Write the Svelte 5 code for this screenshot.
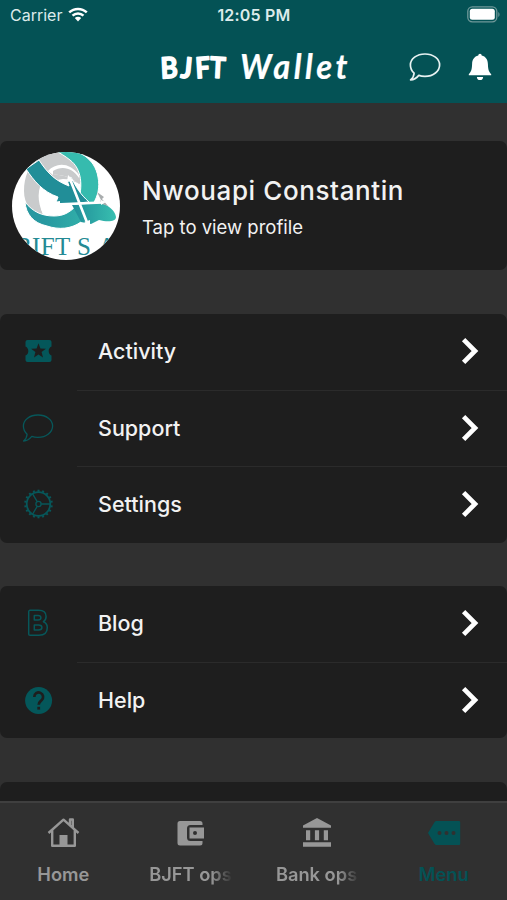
<script>
const groups = [
    [
        { icon: "ticket", label: "Activity" },
        { icon: "chat", label: "Support" },
        { icon: "cog", label: "Settings" }
    ],
    [
        { icon: "blog", label: "Blog" },
        { icon: "help", label: "Help" }
    ]
]

const tabs = [
    { icon: "home", label: "Home" },
    { icon: "wallet", label: "BJFT ops", clipped: true },
    { icon: "bank", label: "Bank ops", clipped: true },
    { icon: "more", label: "Menu" }
]

const teeth = Array.from({ length: 18 }, (_, i) => i * 20)

let active = "Menu"
</script>

{#snippet bubble()}
    <path d="M16 3C24.3 3 30.6 7.8 30.6 14S24.3 25.4 16 25.4c-2.2 0-4.3-.3-6.2-1C7.7 27 4.8 28.8 1.6 29c2-1.700 3.300-4 3.500-6.800C2.700 20 1.400 17.200 1.400 14 1.400 7.800 7.700 3 16 3z" />
{/snippet}

<div class="phone">
    <header>
        <div class="status">
            <div class="carrier">
                <span>Carrier</span>
                <svg class="wifi" viewBox="0 0 20 15">
                    <path d="M1.200 5.400C6.200.700 13.800.700 18.800 5.400M4.500 8.700c3.200-3 7.800-3 11 0" />
                    <path class="solid" d="M6.800 11.100c1.900-1.700 4.500-1.700 6.400 0L10 14.500z" />
                </svg>
            </div>
            <div class="time">12:05 PM</div>
            <svg class="battery" viewBox="0 0 33 17">
                <rect class="shell" x=".8" y=".8" width="29" height="15" rx="4.500" />
                <rect class="level" x="2.800" y="2.800" width="25" height="11" rx="2.500" />
                <path class="tip" d="M31.300 6v5c1.600-.8 1.600-4.200 0-5z" />
            </svg>
        </div>
        <div class="navbar">
            <svg class="brand" viewBox="0 0 200 40">
                <text class="brand-bold" transform="translate(2 28.500) scale(.9 1)" x="0 21 39 54" y="0 -1 0 -1" rotate="-3 6 -4 3">BJFT</text>
                <text class="brand-italic" transform="translate(81 28.500) scale(.96 1)" textLength="112" lengthAdjust="spacing">Wallet</text>
            </svg>
            <svg class="nav-chat" viewBox="0 0 32 32">{@render bubble()}</svg>
            <svg class="bell" viewBox="0 0 24 28">
                <path d="M12 .8c1 0 1.600.7 1.700 1.800 4 .9 6 4 6.200 8.400.2 5.500.8 7.800 3.300 10.200v1H.8v-1C3.300 18.800 3.900 16.500 4.100 11c.2-4.400 2.200-7.500 6.200-8.400C10.400 1.500 11 .8 12 .8zM8.900 23.900h6.200a3.100 3.100 0 0 1-6.200 0z" />
            </svg>
        </div>
    </header>

    <main>
        <section class="card profile">
            <svg class="avatar" viewBox="0 0 108 108">
                <defs>
                    <clipPath id="round"><circle cx="54" cy="54" r="54" /></clipPath>
                    <linearGradient id="teal" x1="0" x2="1" y1="0" y2="0">
                        <stop offset="0" stop-color="#208d98" />
                        <stop offset="1" stop-color="#38bfb0" />
                    </linearGradient>
                    <linearGradient id="swoosh" x1="0" x2="1" y1="0" y2="0">
                        <stop offset=".3" stop-color="#2798a0" />
                        <stop offset="1" stop-color="#33b3ab" />
                    </linearGradient>
                </defs>
                <g clip-path="url(#round)">
                    <rect width="108" height="108" fill="#fff" />
                    <path fill="#c9cbcc" d="M26 6C36-3 55-2 65 10c3 5 4 12 3 22-6-3-12-5-17-5-12 1-21 9-22 20-1 7 0 12 3 17-13-2-20-12-20-25C12 25 17 13 26 6z" />
                    <path fill="#fff" d="M36 19c8-9 22-9 31 4l0 9c-7-6-17-10-26-9z" />
                    <path fill="#c9cbcc" d="M41 19c9-6 20-3 26 7l0 6c-7-6-17-10-26-9z" />
                    <path fill="#fff" d="M32 27l32 22-18 16-15-3c-6-13-6-25 1-35z" />
                    <path fill="#36bbae" stroke="#fff" d="M42-2C67-5 83 7 86 25c2 10 0 19-5 27l-15-1C71 34 70 17 58 8 53 4 48 1 42-2z" />
                    <path fill="url(#swoosh)" stroke="#fff" d="M13 50c8 10 17 14 29 14 9 0 15-3 22-10l14 15-9 1c-10 7-22 8-34 4C21 71 14 62 13 50z" />
                    <path fill="url(#teal)" d="M60 53l29-2c9 3 14 8 15 14 0 5-9 5-17 3l-8 4-10-2z" />
                    <path fill="#218e98" stroke="#fff" d="M14 17L27 8c9 14 17 21 30 26l-2-6 4-3c5 10 9 17 18 25l-34 3 3-8C31 40 22 29 14 17z" />
                    <path fill="#a9adae" d="M85 40l7 5-2 2 6 7-9-3 2-3z" />
                    <path class="cross" d="M43 52.500l47-2M58 27l18 46" />
                    <path fill="#fff" d="M41 50l7-1v7zM55 30l1-7 6 6zM72 70l6-2 0 6zM89 48l5 2-5 3z" />
                    <text x="3" y="103" textLength="101" lengthAdjust="spacing">BIFT S.A</text>
                </g>
            </svg>
            <div class="who">
                <div class="name">Nwouapi Constantin</div>
                <div class="hint">Tap to view profile</div>
            </div>
        </section>

        {#each groups as group}
            <section class="card">
                {#each group as item}
                    <div class="row">
                        <svg class="icon" viewBox="0 0 32 32">
                            {#if item.icon === "ticket"}
                                <path class="fill" fill-rule="evenodd" d="M5.500 5h22a2 2 0 0 1 2 2v4.500c-2 1-2.800 2.500-2.800 4.500s.8 3.500 2.800 4.500V25a2 2 0 0 1-2 2h-22a2 2 0 0 1-2-2v-4.500c2-1 2.800-2.500 2.800-4.500s-.8-3.500-2.800-4.500V7a2 2 0 0 1 2-2zM16.500 8.300l-1.900 5.100-5.500.3 4.300 3.400L12 22.500 16.500 19.500l4.500 3-1.400-5.400 4.300-3.400-5.500-.3z" />
                            {:else if item.icon === "chat"}
                                <g class="line">{@render bubble()}</g>
                            {:else if item.icon === "cog"}
                                <g class="line">
                                    <circle class="ring" cx="16.500" cy="16" r="11.800" />
                                    <circle cx="16.500" cy="16" r="2.600" />
                                    <path d="M19.100 16h9.200M15.200 13.700l-4.600-7.900M15.200 18.300l-4.600 7.900" />
                                    {#each teeth as angle}
                                        <path class="tooth" d="M16.500 3.800V1.700" transform="rotate({angle} 16.500 16)" />
                                    {/each}
                                </g>
                            {:else if item.icon === "blog"}
                                <path class="line bold" d="M8 3.300h8.500c5 0 7.600 2.500 7.600 6.200 0 2.400-1 4.100-2.700 5.200 2.500 1 3.900 3.100 3.900 5.900 0 4.800-3.200 7.700-8.400 7.700H8a1.300 1.300 0 0 1-1.300-1.300V4.600A1.300 1.300 0 0 1 8 3.300zM12.300 8.500v4.500h3.600c2 0 3-.8 3-2.300s-1-2.200-3-2.200zM12.300 18v5h4.100c2.300 0 3.500-.8 3.500-2.500s-1.200-2.500-3.500-2.500z" />
                            {:else}
                                <circle class="fill" cx="16.600" cy="16.500" r="13.500" />
                                <path class="mark" d="M12.300 13a4.400 4.400 0 1 1 7.300 3.200c-1.800 1.600-2.900 2.100-2.900 4.600" />
                                <rect class="dot" x="15.300" y="22.800" width="2.800" height="2.800" />
                            {/if}
                        </svg>
                        <div class="label">{item.label}</div>
                        <svg class="chevron" viewBox="0 0 18 28"><path d="M2.600 2.600L14 14 2.600 25.400" /></svg>
                    </div>
                {/each}
            </section>
        {/each}

        <section class="card next"></section>
    </main>

    <nav>
        {#each tabs as tab}
            <button class="tab" class:active={active === tab.label} on:click={() => { active = tab.label }}>
                <svg viewBox="0 0 34 34">
                    {#if tab.icon === "home"}
                        <path class="house" d="M2.500 17L17.500 3.700l15 13.300M6.200 14.500v15.300h22.600V14.500M24 9V3.500h2.800V12" />
                        <path d="M13.500 19h8v11.500h-8z" />
                    {:else if tab.icon === "wallet"}
                        <path fill-rule="evenodd" d="M7 5h20a2.500 2.500 0 0 1 2.500 2.500V9h-12a3.500 3.500 0 0 0-3.500 3.500v9a3.500 3.500 0 0 0 3.500 3.500h12v2a2.500 2.500 0 0 1-2.500 2.500h-20A2.500 2.500 0 0 1 4.500 27V7.500A2.500 2.500 0 0 1 7 5zM16.500 11.500H31v11H16.500zM22 15a2 2 0 1 0 0 4 2 2 0 0 0 0-4z" />
                    {:else if tab.icon === "bank"}
                        <path d="M17 2l14 7.500v2.300H3V9.500zM6 14.200h4.200v10H6zM14.900 14.200h4.200v10h-4.200zM23.800 14.200H28v10h-4.200zM3 26.300h28v4.400H3z" />
                    {:else}
                        <path fill-rule="evenodd" d="M9.500 5H32a1.200 1.200 0 0 1 1.200 1.200v21.600A1.200 1.200 0 0 1 32 29H9.500c-.8 0-1.400-.3-1.900-1L1 17 7.600 6c.5-.7 1.100-1 1.900-1zM12.500 15a2 2 0 1 0 0 4 2 2 0 0 0 0-4zM19.500 15a2 2 0 1 0 0 4 2 2 0 0 0 0-4zM26.500 15a2 2 0 1 0 0 4 2 2 0 0 0 0-4z" />
                    {/if}
                </svg>
                <span class:clipped={tab.clipped}>{tab.label}</span>
            </button>
        {/each}
    </nav>
</div>

<style>
:global(body) {
    margin: 0;
    background: #2f2f2f;
}
.phone {
    --teal: #045255;
    --card: #1e1e1e;
    display: flex;
    flex-direction: column;
    width: 507px;
    height: 900px;
    overflow: hidden;
    background: #303030;
    color: #f2f2f2;
    font-family: Inter, "Liberation Sans", sans-serif;
}
svg {
    display: block;
    flex: none;
}
header {
    flex: none;
    height: 103px;
    background: var(--teal);
}
.status {
    display: grid;
    grid-template-columns: 1fr auto 1fr;
    align-items: center;
    height: 30px;
    padding: 0 7px 0 10px;
    color: #dcebeb;
    font-size: 16px;
}
.carrier {
    display: flex;
    align-items: center;
    gap: 6px;
}
.wifi {
    width: 20px;
    height: 15px;
    margin-top: -1px;
    fill: none;
    stroke: white;
    stroke-width: 2.5;
}
.wifi .solid {
    fill: white;
    stroke: none;
}
.time {
    padding-right: 2px;
    font-weight: 600;
    font-size: 16px;
    letter-spacing: 0.2px;
}
.battery {
    justify-self: end;
    width: 33px;
    height: 17px;
    margin-top: -2px;
}
.shell {
    fill: none;
    stroke: #6f9899;
    stroke-width: 1.3;
}
.level {
    fill: white;
}
.tip {
    fill: #6f9899;
}
.navbar {
    display: flex;
    align-items: center;
    height: 72px;
    padding: 1px 15px 0 159px;
}
.brand {
    width: 200px;
    height: 40px;
    margin-top: 5px;
    overflow: visible;
    fill: white;
    stroke: white;
    stroke-linejoin: round;
}
.brand-bold {
    font: 700 29px Lato, sans-serif;
    stroke-width: 1.5;
}
.brand-italic {
    font: italic 700 34px Lato, sans-serif;
    stroke-width: 0.2;
}
.nav-chat {
    width: 32px;
    height: 32px;
    margin: -1px 0 0 50px;
    fill: none;
    stroke: #e8f2f2;
    stroke-width: 1.7;
    stroke-linejoin: round;
}
.bell {
    width: 24px;
    height: 28px;
    margin: -1px 0 0 27px;
    fill: white;
}
main {
    flex: 1;
    min-height: 0;
    display: flex;
    flex-direction: column;
    gap: 43px;
    padding-top: 38px;
    overflow: hidden;
}
.card {
    flex: none;
    background: var(--card);
    border-radius: 7px;
}
.profile {
    display: flex;
    align-items: center;
    gap: 22px;
    height: 129px;
    padding-left: 12px;
    margin-bottom: 1px;
}
.avatar {
    width: 108px;
    height: 108px;
}
.avatar text {
    font: 25px "Liberation Serif", serif;
    fill: #248a94;
}
.cross {
    fill: none;
    stroke: white;
    stroke-width: 2.6;
}
.who {
    padding-top: 3px;
}
.name {
    font-size: 26px;
    font-weight: 500;
    line-height: 32px;
    letter-spacing: 0.6px;
}
.hint {
    margin-top: 8px;
    font-size: 18.500px;
    line-height: 24px;
}
.row {
    display: flex;
    align-items: center;
    height: 76px;
    box-sizing: border-box;
    padding: 0 27px 1px 22px;
    background: linear-gradient(#2b2b2b, #2b2b2b) 77px 0 / 100% 1px no-repeat;
}
.row:first-child {
    background: none;
    padding-bottom: 2px;
}
.row:nth-child(3) {
    height: 77px;
}
.icon {
    width: 32px;
    height: 32px;
}
.fill {
    fill: #04575a;
}
.line {
    fill: none;
    stroke: #07575a;
    stroke-width: 1.3;
    stroke-linejoin: round;
}
.ring {
    stroke-width: 1.8;
}
.bold {
    stroke-width: 1.5;
}
.tooth {
    stroke-width: 2;
}
.mark {
    fill: none;
    stroke: var(--card);
    stroke-width: 2.7;
}
.dot {
    fill: var(--card);
}
.label {
    flex: 1;
    margin-left: 44px;
    font-size: 21.500px;
    font-weight: 450;
}
.chevron {
    width: 18px;
    height: 28px;
    margin-right: 1px;
    fill: none;
    stroke: white;
    stroke-width: 4.7;
}
.next {
    height: 80px;
    margin-top: 1px;
}
nav {
    flex: none;
    display: grid;
    grid-template-columns: repeat(4, 1fr);
    height: 99px;
    box-sizing: border-box;
    border-top: 2px solid #3f3f3f;
    background: #303030;
}
.tab {
    display: flex;
    flex-direction: column;
    align-items: center;
    padding: 13px 0 0;
    border: none;
    background: none;
    color: #979797;
    font: 600 18.300px Inter, "Liberation Sans", sans-serif;
    cursor: pointer;
}
.tab svg {
    width: 34px;
    height: 34px;
    fill: currentColor;
}
.house {
    fill: none;
    stroke: currentColor;
    stroke-width: 2.4;
    stroke-linejoin: round;
}
.tab span {
    margin-top: 12px;
    line-height: 24px;
    white-space: nowrap;
}
.tab .clipped {
    width: 82px;
    overflow: hidden;
    text-align: left;
    mask-image: linear-gradient(to right, black 76%, transparent 102%);
}
.tab.active {
    color: var(--teal);
}
</style>
